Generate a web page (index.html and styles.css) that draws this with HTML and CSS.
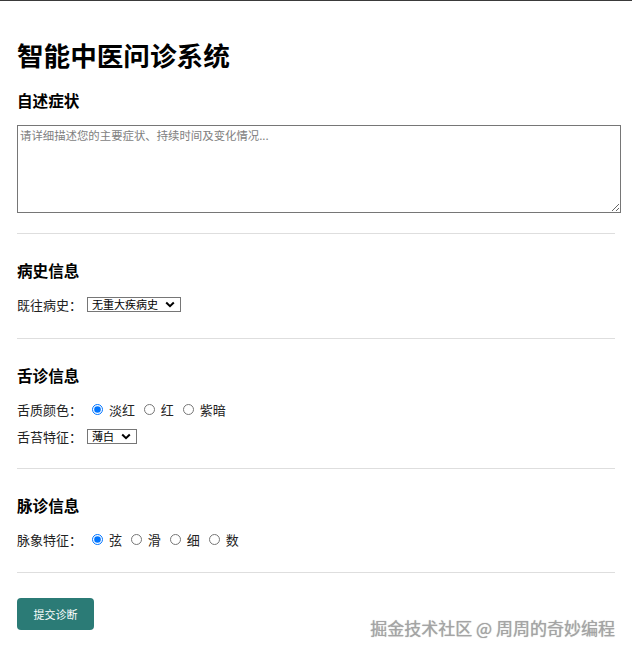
FILE: index.html
```html
<!DOCTYPE html>
<html lang="zh-CN">
<head>
<meta charset="utf-8">
<title>智能中医问诊系统</title>
<link rel="stylesheet" href="styles.css">
</head>
<body>
<div class="page">
  <h1 class="title">智能中医问诊系统</h1>
  <h2 class="sub">自述症状</h2>
  <textarea class="symptoms" placeholder="请详细描述您的主要症状、持续时间及变化情况..."></textarea>

  <section class="section section-first">
    <h3 class="sec-title">病史信息</h3>
    <div class="rows">
      <div class="row">
        <span class="label">既往病史：</span>
        <select class="sel"><option>无重大疾病史</option><option>高血压</option><option>糖尿病</option></select>
      </div>
    </div>
  </section>

  <section class="section">
    <h3 class="sec-title">舌诊信息</h3>
    <div class="rows">
      <div class="row">
        <span class="label">舌质颜色：</span>
        <label class="opt"><input type="radio" name="tongue" checked> 淡红</label>
        <label class="opt"><input type="radio" name="tongue"> 红</label>
        <label class="opt"><input type="radio" name="tongue"> 紫暗</label>
      </div>
      <div class="row">
        <span class="label">舌苔特征：</span>
        <select class="sel"><option>薄白</option><option>黄腻</option></select>
      </div>
    </div>
  </section>

  <section class="section">
    <h3 class="sec-title">脉诊信息</h3>
    <div class="rows">
      <div class="row">
        <span class="label">脉象特征：</span>
        <label class="opt"><input type="radio" name="pulse" checked> 弦</label>
        <label class="opt"><input type="radio" name="pulse"> 滑</label>
        <label class="opt"><input type="radio" name="pulse"> 细</label>
        <label class="opt"><input type="radio" name="pulse"> 数</label>
      </div>
    </div>
  </section>

  <div class="actions">
    <button class="submit" type="button">提交诊断</button>
  </div>
</div>
<div class="watermark">掘金技术社区 @ 周周的奇妙编程</div>
</body>
</html>
```

FILE: styles.css
```css
html, body {
  margin: 0;
  padding: 0;
  background: #fff;
}
body {
  border-top: 1px solid #3a3a3a;
  font-family: "Noto Sans CJK SC", "Noto Sans", sans-serif;
  color: #111;
  min-height: 654px;
  position: relative;
}
.page {
  padding: 0 17px;
}
.title {
  font-size: 26.6px;
  line-height: 32px;
  font-weight: 700;
  margin: 38px 0 19px;
  color: #000;
}
.sub {
  font-size: 15.6px;
  line-height: 20px;
  font-weight: 700;
  margin: 0 0 15px;
  color: #000;
}
.symptoms {
  display: block;
  box-sizing: content-box;
  width: 100%;
  height: 82px;
  margin: 0;
  padding: 2px;
  border: 1px solid #767676;
  font-family: "Noto Sans CJK SC", sans-serif;
  font-size: 11.4px;
  line-height: 14px;
  resize: vertical;
}
.symptoms::placeholder {
  color: #7e7e7e;
}
.section {
  border-top: 1px solid #dedede;
  margin-top: 20px;
  padding-bottom: 2px;
}
.section-first {
  padding-bottom: 4px;
}
.sec-title {
  font-size: 15.6px;
  line-height: 20px;
  font-weight: 700;
  margin: 26px 0 14px;
  color: #000;
}
.rows {
  display: flex;
  flex-direction: column;
  gap: 7px;
}
.row {
  display: flex;
  align-items: center;
  height: 20px;
  font-size: 13px;
  color: #222;
}
.label {
  margin-right: 5px;
}
.sel {
  -webkit-appearance: none;
  appearance: none;
  font-family: "Noto Sans CJK SC", sans-serif;
  font-size: 11px;
  line-height: 13px;
  height: 15px;
  box-sizing: border-box;
  padding: 0 22px 0 4px;
  border: 1px solid #767676;
  border-radius: 0;
  background-color: #fff;
  background-image: url("data:image/svg+xml;utf8,<svg xmlns='http://www.w3.org/2000/svg' width='10' height='7' viewBox='0 0 10 7'><path d='M1.2 1.5 L5 5.2 L8.8 1.5' fill='none' stroke='black' stroke-width='2'/></svg>");
  background-repeat: no-repeat;
  background-position: right 5px center;
  background-size: 10px 7px;
  color: #000;
}
.opt {
  display: inline-flex;
  align-items: center;
  margin-right: 4px;
  white-space: pre;
}
.opt input {
  margin: 0 3px 0 5px;
  width: 11px;
  height: 11px;
}
.actions {
  border-top: 1px solid #dedede;
  margin-top: 21px;
  padding-top: 25px;
}
.submit {
  width: 77px;
  height: 32px;
  border: none;
  border-radius: 4px;
  background: #2b7b76;
  color: #fff;
  font-family: "Noto Sans CJK SC", sans-serif;
  font-size: 11px;
  padding: 0;
}
.watermark {
  position: absolute;
  right: 17px;
  top: 616px;
  font-family: "Noto Sans CJK SC", sans-serif;
  font-size: 17px;
  line-height: 22px;
  color: #a4a4a4;
  text-shadow: 0 0 1px rgba(0, 0, 0, 0.35);
}
```
